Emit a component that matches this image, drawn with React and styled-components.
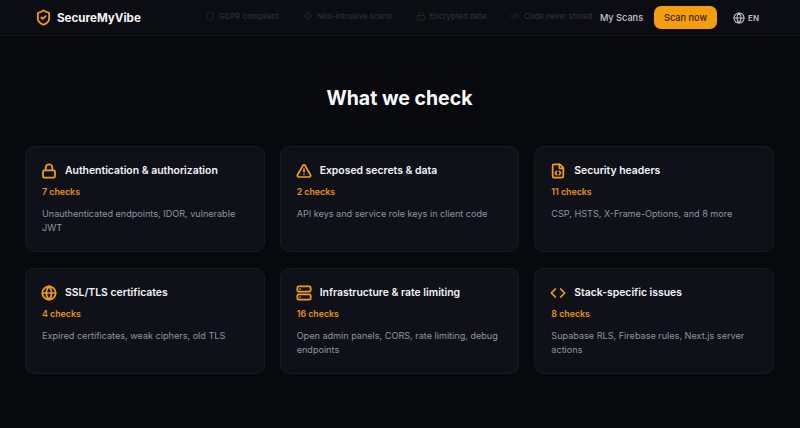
import React from 'react';
import styled, { createGlobalStyle } from 'styled-components';
import { Shield, ShieldCheck, Zap, Lock, CodeXml, Globe, TriangleAlert, FileCode, Server, Code } from 'lucide-react';

const GlobalStyle = createGlobalStyle`
  html, body {
    margin: 0;
    padding: 0;
    background: #08090d;
    font-family: Inter, "Liberation Sans", sans-serif;
  }
`;

const Page = styled.div`
  width: 800px;
  height: 428px;
  overflow: hidden;
  background: #08090d;
`;

const Header = styled.header`
  height: 35px;
  display: flex;
  align-items: center;
  padding: 0 41px 0 37px;
  background: #0c0d13;
  border-bottom: 1px solid #15151a;
`;

const Logo = styled.div`
  display: flex;
  flex: none;
  align-items: center;
  gap: 5px;
  width: 168px;
  font-size: 11.6px;
  font-weight: 700;
  color: #f4f4f5;
  svg {
    color: #f59e0b;
    flex: none;
    margin-left: -2px;
  }
`;

const TrustList = styled.div`
  display: flex;
  align-items: center;
  gap: 24px;
  margin-top: -4px;
  flex: 1;
  min-width: 0;
`;

const TrustItem = styled.span`
  display: flex;
  align-items: center;
  gap: 4px;
  font-size: 7.75px;
  font-weight: 500;
  color: #2c2d33;
  white-space: nowrap;
  svg {
    color: #33291a;
  }
`;

const Nav = styled.nav`
  display: flex;
  flex: none;
  align-items: center;
`;

const NavLink = styled.a`
  font-size: 9.2px;
  font-weight: 500;
  color: #c4c4cc;
  margin-right: 11px;
  white-space: nowrap;
`;

const ScanButton = styled.button`
  width: 63px;
  height: 23px;
  border: 0;
  border-radius: 7px;
  padding: 0;
  background: #f59e0b;
  color: #3a2503;
  font-family: inherit;
  font-size: 9.2px;
  font-weight: 500;
`;

const Lang = styled.div`
  display: flex;
  align-items: center;
  gap: 3px;
  margin-left: 16px;
  font-size: 8px;
  font-weight: 600;
  color: #c4c4cc;
`;

const Section = styled.section`
  padding: 50px 26px 0 25px;
`;

const Title = styled.h2`
  margin: 0 0 36px;
  height: 24px;
  line-height: 24px;
  text-align: center;
  font-size: 19.5px;
  font-weight: 700;
  color: #fafafa;
`;

const Grid = styled.div`
  display: grid;
  grid-template-columns: repeat(3, 1fr);
  gap: 16px 15px;
`;

const Card = styled.article`
  box-sizing: border-box;
  height: 106px;
  padding: 15px 16px;
  background: #0f1118;
  border: 1px solid #181a21;
  border-radius: 9px;
`;

const CardHead = styled.div`
  display: flex;
  align-items: center;
  gap: 8px;
  height: 17px;
  svg {
    color: #f59e0b;
    flex: none;
    margin-left: -1px;
  }
`;

const CardTitle = styled.h3`
  margin: 0;
  font-size: 10.4px;
  font-weight: 600;
  color: #f4f4f5;
`;

const Count = styled.div`
  margin-top: 6px;
  height: 14px;
  line-height: 14px;
  font-size: 8.8px;
  font-weight: 600;
  color: #e8930c;
`;

const Desc = styled.p`
  margin: 8px 0 0;
  font-size: 9.1px;
  line-height: 14.4px;
  color: #93939c;
`;

const trust = [
  { icon: Shield, label: 'GDPR compliant' },
  { icon: Zap, label: 'Non-intrusive scans' },
  { icon: Lock, label: 'Encrypted data' },
  { icon: CodeXml, label: 'Code never stored' },
];

const checks = [
  { icon: Lock, title: 'Authentication & authorization', count: '7 checks', desc: 'Unauthenticated endpoints, IDOR, vulnerable JWT' },
  { icon: TriangleAlert, title: 'Exposed secrets & data', count: '2 checks', desc: 'API keys and service role keys in client code' },
  { icon: FileCode, title: 'Security headers', count: '11 checks', desc: 'CSP, HSTS, X-Frame-Options, and 8 more' },
  { icon: Globe, title: 'SSL/TLS certificates', count: '4 checks', desc: 'Expired certificates, weak ciphers, old TLS' },
  { icon: Server, title: 'Infrastructure & rate limiting', count: '16 checks', desc: 'Open admin panels, CORS, rate limiting, debug endpoints' },
  { icon: Code, title: 'Stack-specific issues', count: '8 checks', desc: 'Supabase RLS, Firebase rules, Next.js server actions' },
];

const App = () => {
  return (
    <Page>
      <GlobalStyle />
      <Header>
        <Logo>
          <ShieldCheck size={17} strokeWidth={2.5} />
          SecureMyVibe
        </Logo>
        <TrustList>
          {trust.map(({ icon: Icon, label }) => (
            <TrustItem key={label}>
              <Icon size={10} />
              {label}
            </TrustItem>
          ))}
        </TrustList>
        <Nav>
          <NavLink>My Scans</NavLink>
          <ScanButton>Scan now</ScanButton>
          <Lang>
            <Globe size={12} strokeWidth={2.2} />
            EN
          </Lang>
        </Nav>
      </Header>
      <Section>
        <Title>What we check</Title>
        <Grid>
          {checks.map(({ icon: Icon, title, count, desc }) => (
            <Card key={title}>
              <CardHead>
                <Icon size={16} strokeWidth={2.6} />
                <CardTitle>{title}</CardTitle>
              </CardHead>
              <Count>{count}</Count>
              <Desc>{desc}</Desc>
            </Card>
          ))}
        </Grid>
      </Section>
    </Page>
  );
};

export default App;
